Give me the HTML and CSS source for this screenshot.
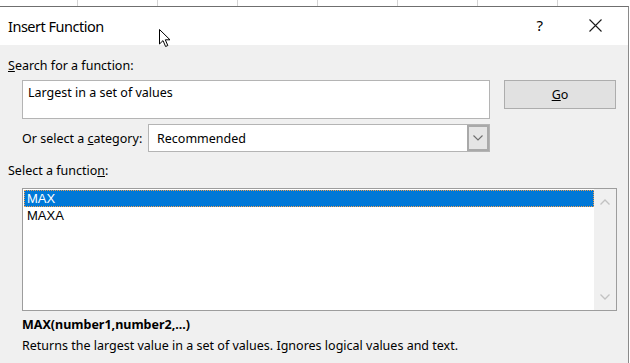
FILE: index.html
```html
<!DOCTYPE html>
<html>
<head>
<meta charset="utf-8">
<link rel="stylesheet" href="styles.css">
</head>
<body>
<div class="sheet">
  <div class="dialog">
    <div class="titlebar">
      <span class="title">Insert Function</span>
      <span class="help">?</span>
      <svg class="close" width="13" height="13" viewBox="0 0 13 13"><path d="M0.5 0.5 L12.5 12.5 M12.5 0.5 L0.5 12.5" stroke="#1a1a1a" stroke-width="1.1" fill="none"/></svg>
    </div>
    <div class="body">
      <div class="label"><u>S</u>earch for a function:</div>
      <div class="row search-row">
        <div class="searchbox">Largest in a set of values</div>
        <div class="gobtn"><u>G</u>o</div>
      </div>
      <div class="row cat-row">
        <span class="cat-label">Or select a <u>c</u>ategory:</span>
        <div class="combo">
          <span class="combo-text">Recommended</span>
          <div class="combo-btn">
            <svg width="10" height="6" viewBox="0 0 10 6"><path d="M0.5 0.5 L5 5 L9.5 0.5" stroke="#6d6d6d" stroke-width="1.1" fill="none"/></svg>
          </div>
        </div>
      </div>
      <div class="label sel-label">Select a functio<u>n</u>:</div>
      <div class="listbox">
        <div class="items">
          <div class="item selected">MAX</div>
          <div class="item">MAXA</div>
        </div>
        <div class="scrollbar">
          <svg width="10" height="6" viewBox="0 0 10 6"><path d="M0.5 5.5 L5 1 L9.5 5.5" stroke="#c2c2c2" stroke-width="1.3" fill="none"/></svg>
          <svg width="10" height="6" viewBox="0 0 10 6"><path d="M0.5 0.5 L5 5 L9.5 0.5" stroke="#c2c2c2" stroke-width="1.3" fill="none"/></svg>
        </div>
      </div>
      <div class="signature">MAX(number1,number2,...)</div>
      <div class="desc">Returns the largest value in a set of values. Ignores logical values and text.</div>
    </div>
  </div>
  <svg class="cursor" width="14" height="20" viewBox="0 0 14 20"><path d="M1.5 1.5 L1.5 16 L5 12.6 L7.6 18.5 L9.8 17.5 L7.3 11.8 L12 11.8 Z" fill="#fff" stroke="#000" stroke-width="1" stroke-linejoin="miter"/></svg>
</div>
</body>
</html>
```
FILE: styles.css
```css
* { box-sizing: border-box; }
html, body { margin: 0; padding: 0; }
body {
  width: 630px;
  height: 363px;
  overflow: hidden;
  font-family: "Noto Sans", "Open Sans", sans-serif;
  font-size: 12.5px;
  color: #000;
}
.sheet {
  position: relative;
  width: 630px;
  height: 363px;
  background-color: #fff;
  background-image: repeating-linear-gradient(to right, transparent 0, transparent 77px, #d4d4d4 77px, #d4d4d4 78px, transparent 78px, transparent 80px);
  padding-top: 6px;
  overflow: hidden;
}
.dialog {
  width: 629px;
  height: 400px;
  background: #f0f0f0;
  border-top: 1px solid #6f6f6f;
  border-right: 1px solid #8a8a8a;
}
.titlebar {
  height: 38px;
  background: #fff;
  display: flex;
  align-items: center;
  padding-left: 8px;
}
.title {
  font-size: 14.5px;
  letter-spacing: -0.5px;
  flex: 1;
  margin-top: -1px;
}
.help {
  font-size: 15px;
  margin-right: 46px;
  margin-top: -2px;
}
.close {
  margin-right: 26px;
  margin-top: -1px;
}
.body {
  padding: 12px 0 0 8px;
}
.label {
  height: 18px;
  line-height: 18px;
}
.row {
  display: flex;
}
.search-row {
  margin-top: 5px;
  margin-left: 14px;
  align-items: flex-start;
}
.searchbox {
  width: 468px;
  height: 39px;
  background: #fff;
  border: 1px solid #b4b4b4;
  padding: 3px 0 0 5px;
  line-height: 18px;
}
.gobtn {
  margin-left: 14px;
  width: 112px;
  height: 29px;
  background: #e1e1e1;
  border: 1px solid #adadad;
  display: flex;
  align-items: center;
  justify-content: center;
}
.cat-row {
  margin-top: 5px;
  margin-left: 14px;
  align-items: center;
}
.cat-label {
  width: 126px;
}
.combo {
  width: 342px;
  height: 28px;
  background: #fff;
  border: 1px solid #b4b4b4;
  display: flex;
  align-items: center;
}
.combo-text {
  flex: 1;
  padding-left: 8px;
}
.combo-btn {
  width: 22px;
  height: 26px;
  background: #e5e5e5;
  border: 2px solid #a9a9a9;
  display: flex;
  align-items: center;
  justify-content: center;
}
.sel-label {
  margin-top: 10px;
}
.listbox {
  margin-top: 8px;
  margin-left: 14px;
  width: 595px;
  height: 123px;
  background: #fff;
  border: 1px solid #9d9d9d;
  display: flex;
  padding: 1px 0 0 1px;
}
.items {
  flex: 1;
}
.item {
  height: 17px;
  line-height: 17px;
  padding-left: 3px;
  font-family: "Liberation Sans", Arial, sans-serif;
  font-size: 13px;
}
.item.selected {
  background: #0078d7;
  color: #fff;
  outline: 1px dotted #f0a050;
  outline-offset: -1px;
}
.scrollbar {
  width: 22px;
  margin-top: -1px;
  background: #f0f0f0;
  display: flex;
  flex-direction: column;
  justify-content: space-between;
  align-items: center;
  padding: 10px 0 10px 0;
}
.signature {
  margin-left: 14px;
  margin-top: 5px;
  height: 18px;
  line-height: 18px;
  font-weight: bold;
}
.desc {
  margin-left: 14px;
  margin-top: 3px;
  height: 18px;
  line-height: 18px;
}
.cursor {
  position: absolute;
  left: 158px;
  top: 28px;
}
```
